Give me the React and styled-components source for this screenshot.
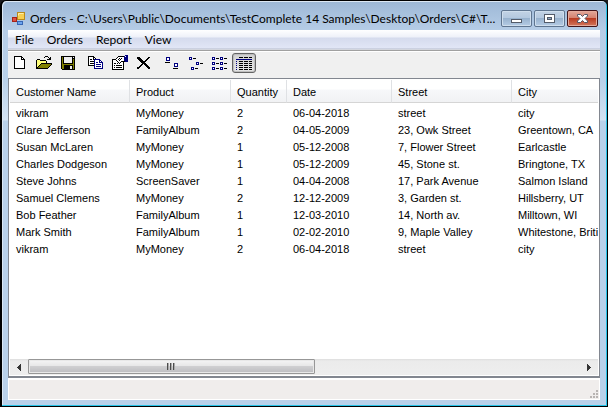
import React from "react";
import styled, { createGlobalStyle, css } from "styled-components";

const GlobalStyle = createGlobalStyle`
  * { box-sizing: border-box; }
  html, body { margin: 0; background: #1b1b1f; }
  button { font: inherit; color: inherit; }
`;

const uiFont = 'Lato, "Open Sans", sans-serif';
const listFont = '"Liberation Sans", Arial, sans-serif';

const Window = styled.div`
  min-height: 100vh;
  display: flex;
  flex-direction: column;
  padding: 1px 7px 6px 6px;
  border: 1px solid #000;
  border-left-width: 2px;
  border-radius: 6px 6px 0 0;
  overflow: hidden;
  background: linear-gradient(#9db8d6 0, #b6cde7 30px, #b9d1ea 80px, #d3e2f2 119px, #b9d1ea 120px);
  box-shadow: inset -1px -1px 0 #27c4e8, inset 1px 1px 0 #dce8f4;
`;

const TitleBar = styled.header`
  height: 28px;
  display: flex;
  align-items: center;
  gap: 4px;
  padding: 5px 2px 0 4px;
`;

const Title = styled.h1`
  flex: 1;
  min-width: 0;
  margin: 0;
  font: 400 12px/18px ${uiFont};
  color: #000;
  white-space: nowrap;
  overflow: hidden;
  text-overflow: ellipsis;
`;

const Captions = styled.div`
  display: flex;
  gap: 2px;
`;

const CaptionButton = styled.button`
  width: 31px;
  height: 17px;
  padding: 0;
  display: grid;
  place-items: center;
  border: 1px solid #5f7590;
  border-radius: 2px;
  background: linear-gradient(#c3d3e5 0, #b3c8df 48%, #98b2ce 50%, #b5cce5 100%);
  box-shadow: inset 0 0 0 1px #cfdeed;
  ${(p) => p.$close && css`
    border-color: #43151a;
    background: linear-gradient(#e2a89a 0, #d5806d 48%, #b93c22 50%, #d3775c 100%);
    box-shadow: inset 0 0 0 1px #e5ab9c;
  `}
`;

const Client = styled.main`
  flex: 1;
  display: flex;
  flex-direction: column;
  min-width: 0;
  background: #f0f0f0;
`;

const MenuBar = styled.nav`
  height: 21px;
  display: flex;
  background: linear-gradient(#fff 0, #eef1f9 7px, #d5dbed 8px, #e1e6f6 18px, #b6bccc 19px, #f0f0f0 20px);
  border-bottom: 1px solid #a0a0a0;
`;

const MenuItem = styled.button`
  height: 20px;
  padding: 0 6px 0 7px;
  border: 0;
  background: none;
  font: 12px/18px ${uiFont};
`;

const ToolBar = styled.div`
  height: 27px;
  display: flex;
  align-items: flex-start;
  gap: 4px;
  padding-top: 1px;
  border-top: 1px solid #fff;
`;

const ToolGroup = styled.div`
  display: flex;
`;

const ToolButton = styled.button`
  width: 24px;
  height: 20px;
  padding: 0;
  display: grid;
  place-items: center;
  border: 1px solid transparent;
  border-radius: 3px;
  background: none;
  ${(p) => p.$active && css`
    border-color: #646464;
    background: linear-gradient(#d2d2d2, #e8e8e8);
    box-shadow: inset 0 0 1px 1px #bcbcbc;
  `}
`;

const ListView = styled.section`
  flex: 1;
  display: flex;
  flex-direction: column;
  min-width: 0;
  padding: 1px;
  border: 1px solid #828790;
  border-bottom-width: 2px;
  background: #fff;
`;

const ListBody = styled.div`
  flex: 1;
  min-width: 0;
  overflow: hidden;
`;

const Table = styled.table`
  width: 680px;
  table-layout: fixed;
  border-collapse: separate;
  border-spacing: 0;
  font: 11px/17px ${listFont};
  color: #000;
  thead::after { content: ""; display: block; height: 2px; }
`;

const Column = styled.col`
  width: ${(p) => p.$width}px;
`;

const HeadCell = styled.th`
  height: 23px;
  padding: 2px 0 0 6px;
  font-weight: 400;
  text-align: left;
  white-space: nowrap;
  background: linear-gradient(#fff 0, #fff 9px, #f7f8fa 10px, #f1f2f4 100%);
  border-right: 1px solid #dfe1e4;
  border-bottom: 1px solid #d5d5d5;
`;

const Cell = styled.td`
  height: 17px;
  padding: 0 0 0 6px;
  white-space: nowrap;
`;

const ScrollBar = styled.div`
  height: 16px;
  display: flex;
  background: linear-gradient(#dedede 0, #ebebeb 2px, #eee 100%);
`;

const ScrollArrow = styled.button`
  width: 18px;
  padding: 0;
  display: grid;
  place-items: center;
  border: 0;
  background: none;
`;

const Track = styled.div`
  flex: 1;
  display: flex;
`;

const Thumb = styled.button`
  width: 52%;
  height: 15px;
  padding: 0;
  display: grid;
  place-items: center;
  border: 1px solid #979797;
  border-radius: 1px;
  background: linear-gradient(#f5f5f5 0, #e6e6e7 48%, #cfcfd1 50%, #bcbcc0 100%);
  box-shadow: inset 0 0 0 1px #e8e8e8;
`;

const StatusBar = styled.footer`
  height: 22px;
  display: flex;
  justify-content: flex-end;
  align-items: flex-end;
  padding: 1px;
  background: #f0edec;
  border: 1px solid #fff;
  border-top-width: 2px;
`;

const Glyph = ({ w = 16, h = 16, children }) => (
  <svg width={w} height={h} viewBox={`0 0 ${w} ${h}`} shapeRendering="crispEdges" aria-hidden="true">
    {children}
  </svg>
);

const AppIcon = () => (
  <svg width="14" height="14" viewBox="0 0 14 14" aria-hidden="true">
    <rect x="5.5" y="0.5" width="7" height="7" fill="#f8cf50" stroke="#b98a1c" />
    <path d="M6.5 3.5v-2h5" fill="none" stroke="#fff0a8" />
    <rect x="0.5" y="5.5" width="4" height="4" fill="#e05040" stroke="#a5241a" />
    <rect x="5.5" y="9.5" width="5" height="3" fill="#6ca5ef" stroke="#3767b5" />
  </svg>
);

const NewIcon = () => (
  <Glyph>
    <path d="M2.5 1.5h7l3 3v9h-10z" fill="#fff" stroke="#000" />
    <path d="M9.5 1.5v3h3" fill="none" stroke="#000" />
  </Glyph>
);

const OpenIcon = () => (
  <Glyph>
    <path d="M1 5h3v1h7v3H6l-5 5z" fill="#ffff7a" />
    <path d="M0 5h1v8H0zM1 4h3v1H1zM4 5h6v1H4zM10 6h1v2h-1zM5 8h11v1H5zM4 9h1v1H4zM3 10h1v1H3zM2 11h1v1H2zM1 12h1v1H1zM15 9h1v1h-1zM14 10h1v1h-1zM13 11h1v1h-1zM12 12h1v1h-1zM0 13h12v1H0z" fill="#000" />
    <path d="M5 9h10v1H5zM4 10h10v1H4zM3 11h10v1H3zM2 12h10v1H2z" fill="#808000" />
    <path d="M9 1h3v1H9zM8 2h1v1H8zM12 2h1v1h-1zM14 2h1v3h-4V4h2V3h1z" fill="#000" />
  </Glyph>
);

const SaveIcon = () => (
  <Glyph>
    <path d="M1 1h14v14H2l-1-1z" fill="#000" />
    <path d="M2 2h1v7h10V4h1v10H2z" fill="#808000" />
    <path d="M4 2h8v6H4zM13 2h1v1h-1z" fill="#efefef" />
    <path d="M4 10h9v4H4z" fill="#000" />
    <path d="M10 11h2v3h-2z" fill="#efefef" />
  </Glyph>
);

const CopyIcon = () => (
  <Glyph>
    <path d="M.5 1.5h5l3 3v6h-8z" fill="#fff" stroke="#000" />
    <path d="M5.5 1.5v3h3M2 4.5h2M2 6.5h4M2 8.5h4" fill="none" stroke="#000" />
    <path d="M6.5 4.5h5l3 3v6h-8z" fill="#fff" stroke="#000080" />
    <path d="M11.5 4.5v3h3M8 7.5h2M8 9.5h5M8 11.5h5" fill="none" stroke="#000080" />
  </Glyph>
);

const PropertiesIcon = () => (
  <Glyph>
    <path d="M.5 4.5h11v10H.5z" fill="#fff" stroke="#000" />
    <path d="M2 8.5h2M5 8.5h1M2 10.5h1M4 10.5h6M2 12.5h1M4 12.5h6" stroke="#000" />
    <path d="M4 4h1V3h1V2h1V1h6v5h-3v1H9v1H8v1H7V8H6V7H5V6H4z" fill="#fff" />
    <path d="M3 4h1v1H3zM4 3h1v1H4zM5 2h1v1H5zM6 1h6v1H6zM4 5h1v1H4zM5 6h1v1H5zM6 7h1v1H6zM7 8h1v1H7zM8 7h1v1H8zM9 6h4v1H9zM6 4h1v1H6zM7 3h1v1H7zM8 4h1v1H8zM7 5h1v1H7zM9 3h1v1H9z" fill="#000" />
    <path d="M12 1h1V0h3v7h-3V6h-1z" fill="#000080" />
    <path d="M13 1h1v1h-1z" fill="#fff" />
  </Glyph>
);

const DeleteIcon = () => (
  <Glyph>
    <path d="M1 2h3v1h1v1h1v1h1v1h2V5h1V4h1V3h1V2h2v1h-1v1h-1v1h-1v1h-1v1H9v1h1v1h1v1h1v1h1v1h1v2h-2v-1h-1v-1h-1v-1H9v-1H8V9H7v1H6v1H5v1H4v1H3v1H1v-2h2v-1h1v-1h1V9h1V8H5V7H4V6H3V5H2V4H1z" fill="#000" />
  </Glyph>
);

const LargeIcon = () => (
  <Glyph>
    <path d="M2.5 2.5h3v3h-3zM10.5 8.5h3v3h-3z" fill="#fff" stroke="#000080" />
    <path d="M1 7.5h5M9 13.5h5" stroke="#000" />
  </Glyph>
);

const SmallIcon = () => (
  <Glyph>
    <path d="M1.5 2.5h2v2h-2zM8.5 7.5h2v2h-2zM3.5 12.5h2v2h-2z" fill="#fff" stroke="#000080" />
    <path d="M5 3.5h3M12 8.5h3M7 13.5h3" stroke="#000" />
  </Glyph>
);

const ListIcon = () => (
  <Glyph>
    <path d="M.5 2.5h2v2h-2zM8.5 2.5h2v2h-2zM.5 7.5h2v2h-2zM8.5 7.5h2v2h-2zM.5 12.5h2v2h-2zM8.5 12.5h2v2h-2z" fill="#fff" stroke="#000080" />
    <path d="M4 3.5h3M12 3.5h3M4 8.5h3M12 8.5h3M4 13.5h3M12 13.5h3" stroke="#000" />
  </Glyph>
);

const DetailsIcon = () => (
  <Glyph>
    <path d="M3 2.5h13M3 6.5h13M3 8.5h13M3 10.5h13M3 12.5h13M3 14.5h13" stroke="#000" strokeDasharray="4 1" />
    <path d="M0 4.5h16" stroke="#000080" />
    <path d="M.5 6v9" stroke="#000080" strokeDasharray="1 1" />
  </Glyph>
);

const toolGroups = [
  [["New", NewIcon], ["Open", OpenIcon], ["Save", SaveIcon]],
  [["Copy", CopyIcon], ["Properties", PropertiesIcon], ["Delete", DeleteIcon]],
  [["Large icons", LargeIcon], ["Small icons", SmallIcon], ["List", ListIcon], ["Details", DetailsIcon]],
];

const columns = [
  ["Customer Name", 120],
  ["Product", 101],
  ["Quantity", 56],
  ["Date", 105],
  ["Street", 120],
  ["City", 178],
];

const orders = [
  ["vikram", "MyMoney", "2", "06-04-2018", "street", "city"],
  ["Clare Jefferson", "FamilyAlbum", "2", "04-05-2009", "23, Owk Street", "Greentown, CA"],
  ["Susan McLaren", "MyMoney", "1", "05-12-2008", "7, Flower Street", "Earlcastle"],
  ["Charles Dodgeson", "MyMoney", "1", "05-12-2009", "45, Stone st.", "Bringtone, TX"],
  ["Steve Johns", "ScreenSaver", "1", "04-04-2008", "17, Park Avenue", "Salmon Island"],
  ["Samuel Clemens", "MyMoney", "2", "12-12-2009", "3, Garden st.", "Hillsberry, UT"],
  ["Bob Feather", "FamilyAlbum", "1", "12-03-2010", "14, North av.", "Milltown, WI"],
  ["Mark Smith", "FamilyAlbum", "1", "02-02-2010", "9, Maple Valley", "Whitestone, Britis"],
  ["vikram", "MyMoney", "2", "06-04-2018", "street", "city"],
];

export default function App() {
  return (
    <>
      <GlobalStyle />
      <Window>
        <TitleBar>
          <AppIcon />
          <Title>Orders - C:\Users\Public\Documents\TestComplete 14 Samples\Desktop\Orders\C#\T...</Title>
          <Captions>
            <CaptionButton aria-label="Minimize">
              <Glyph w={11} h={9}>
                <path d="M.5 5.5h10v3H.5z" fill="#fff" stroke="#535b69" />
              </Glyph>
            </CaptionButton>
            <CaptionButton aria-label="Maximize">
              <Glyph w={11} h={9}>
                <path d="M.5 .5h10v8H.5z" fill="#fff" stroke="#535b69" />
                <path d="M3.5 3.5h4v2h-4z" fill="#8fa8c4" stroke="#535b69" />
              </Glyph>
            </CaptionButton>
            <CaptionButton $close aria-label="Close">
              <svg width="13" height="11" viewBox="0 0 13 11" aria-hidden="true">
                <path d="M1.5 1.5h3l2 2 2-2h3v1.5L9 5.5 11.5 8v1.5h-3l-2-2-2 2h-3V8L4 5.5 1.5 3z" fill="#fff" stroke="#535666" />
              </svg>
            </CaptionButton>
          </Captions>
        </TitleBar>
        <Client>
          <MenuBar aria-label="Main menu">
            {["File", "Orders", "Report", "View"].map((m) => (
              <MenuItem key={m}>{m}</MenuItem>
            ))}
          </MenuBar>
          <ToolBar role="toolbar">
            {toolGroups.map((group, i) => (
              <ToolGroup key={i}>
                {group.map(([name, Icon]) => (
                  <ToolButton key={name} aria-label={name} $active={name === "Details"}>
                    <Icon />
                  </ToolButton>
                ))}
              </ToolGroup>
            ))}
          </ToolBar>
          <ListView>
            <ListBody>
              <Table>
                <colgroup>
                  {columns.map(([name, width]) => (
                    <Column key={name} $width={width} />
                  ))}
                </colgroup>
                <thead>
                  <tr>
                    {columns.map(([name]) => (
                      <HeadCell key={name} scope="col">{name}</HeadCell>
                    ))}
                  </tr>
                </thead>
                <tbody>
                  {orders.map((order, r) => (
                    <tr key={r}>
                      {order.map((value, c) => (
                        <Cell key={c}>{value}</Cell>
                      ))}
                    </tr>
                  ))}
                </tbody>
              </Table>
            </ListBody>
            <ScrollBar>
              <ScrollArrow aria-label="Scroll left">
                <Glyph w={4} h={7}>
                  <path d="M4 0v7L0 3.5z" fill="#333" />
                </Glyph>
              </ScrollArrow>
              <Track>
                <Thumb aria-label="Scroll position">
                  <Glyph w={9} h={7}>
                    <path d="M.5 0v7M3.5 0v7M6.5 0v7" stroke="#4c4c4c" />
                    <path d="M1.5 0v7M4.5 0v7M7.5 0v7" stroke="#aaa" />
                  </Glyph>
                </Thumb>
              </Track>
              <ScrollArrow aria-label="Scroll right">
                <Glyph w={4} h={7}>
                  <path d="M0 0v7l4-3.5z" fill="#333" />
                </Glyph>
              </ScrollArrow>
            </ScrollBar>
          </ListView>
          <StatusBar>
            <Glyph w={8} h={8}>
              <path d="M6 0h2v2H6zM3 3h2v2H3zM6 3h2v2H6zM0 6h2v2H0zM3 6h2v2H3zM6 6h2v2H6z" fill="#b8b4b2" />
            </Glyph>
          </StatusBar>
        </Client>
      </Window>
    </>
  );
}
